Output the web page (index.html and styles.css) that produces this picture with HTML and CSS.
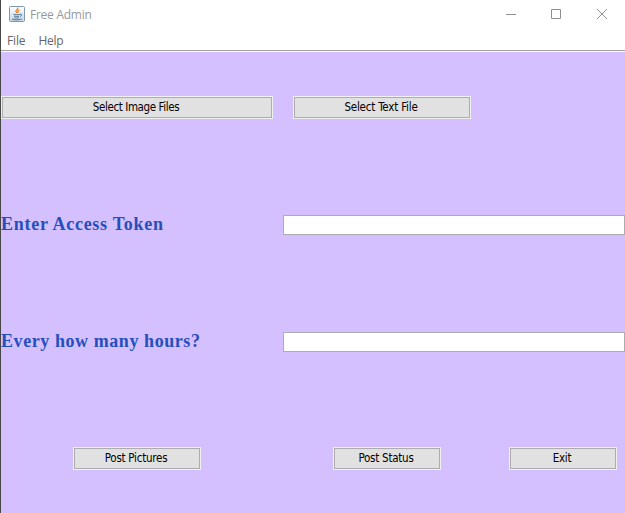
FILE: index.html
```html
<!DOCTYPE html>
<html lang="en">
<head>
<meta charset="utf-8">
<title>Free Admin</title>
<link rel="stylesheet" href="styles.css">
</head>
<body>
<div class="window">
  <header class="titlebar">
    <svg class="java" width="16" height="16" viewBox="0 0 16 16">
      <defs><linearGradient id="tile" x2="0" y2="1"><stop stop-color="#fff"/><stop offset="1" stop-color="#c5d5e2"/></linearGradient></defs>
      <rect x=".5" y=".5" width="15" height="15" rx="1" fill="url(#tile)" stroke="#7f98ac"/>
      <path d="M8.8 1.5c.8 2-3.2 2.7-1.7 4.5l.7 1M10.4 3.8C7.8 5 8.7 5.7 8.6 7" fill="none" stroke="#e8832c" stroke-width="1.3"/>
      <path d="M4.3 8.2c1.6.7 4.8.6 6.6 0M5 10c1.5.6 3.8.6 5.3 0M5.4 11.7c1.3.5 3.1.5 4.5 0M11 8.2c2.3-.5 2.3 1.6 0 2.2M3 13c2 1.2 7.5 1.1 9.8-.2" fill="none" stroke="#4f7796" stroke-width="1"/>
    </svg>
    <span class="title">Free Admin</span>
    <svg class="controls" width="104" height="12" viewBox="0 0 104 12" fill="none" stroke="#8f8f8f">
      <path d="M0 6.5h10M45.5 1.5h9v9h-9z"/>
      <path d="M91 1l10 10M101 1L91 11"/>
    </svg>
  </header>
  <nav class="menubar"><span class="file">File</span><span class="help">Help</span></nav>
  <main class="content">
    <div class="row selectors">
      <button class="images"><span>Select Image Files</span></button>
      <button class="text"><span>Select Text File</span></button>
    </div>
    <div class="row field"><label class="token" for="token">Enter Access Token</label><input id="token"></div>
    <div class="row field second"><label class="hours" for="hours">Every how many hours?</label><input id="hours"></div>
    <div class="row actions">
      <button class="pictures"><span>Post Pictures</span></button>
      <button class="status"><span>Post Status</span></button>
      <button class="exit"><span>Exit</span></button>
    </div>
  </main>
</div>
</body>
</html>
```
FILE: styles.css
```css
* { box-sizing: border-box; }
body { margin: 0; background: #fff; overflow: hidden; }
.window { width: 625px; height: 513px; border-left: 1px solid #484848; display: flex; flex-direction: column; }
.titlebar { height: 30px; display: flex; align-items: center; padding: 0 17px 2px 8px; font: 12px/16px "Open Sans", sans-serif; color: #999; }
.title { margin-left: 5px; padding-top: 2px; letter-spacing: -.25px; }
.controls { margin-left: auto; margin-right: -2px; }
.menubar { height: 22px; display: flex; padding: 3px 0 0 6px; border-bottom: 1px solid #fff; box-shadow: inset 0 -1px #a0a0a0; font: 12px/16px "Open Sans", sans-serif; color: #666; }
.file { letter-spacing: -.15px; }
.help { margin-left: 13px; letter-spacing: -.25px; }
.content { flex: 1; background: #d4c0ff; padding-top: 44px; }
.row { display: flex; }
button { height: 23px; flex: none; padding: 0 2px 0 0; border: 1px solid #f0f0f0; box-shadow: inset 0 0 0 1px #adadad; background: #e1e1e1; color: #000; font: 11.5px/19px "DejaVu Sans Condensed", sans-serif; letter-spacing: -.25px; }
button span { display: block; }
.images { width: 272px; letter-spacing: -.4px; }
.text { width: 178px; margin-left: 20px; letter-spacing: -.2px; }
.field { margin-top: 96px; height: 20px; align-items: center; }
.second { margin-top: 97px; }
label { width: 282px; padding-bottom: 2px; font: bold 18px/18px "Liberation Serif", serif; color: #254fbd; white-space: nowrap; }
.token { letter-spacing: .72px; }
.hours { letter-spacing: .57px; }
input { width: 342px; height: 20px; margin: 0; padding: 0 2px; border: 1px solid #abadb3; border-radius: 0; background: #fff; outline: 0; }
.actions { margin-top: 95px; padding-left: 72px; }
.pictures { width: 128px; }
.status { width: 108px; margin-left: 132px; }
.exit { width: 108px; margin-left: 68px; }
```
